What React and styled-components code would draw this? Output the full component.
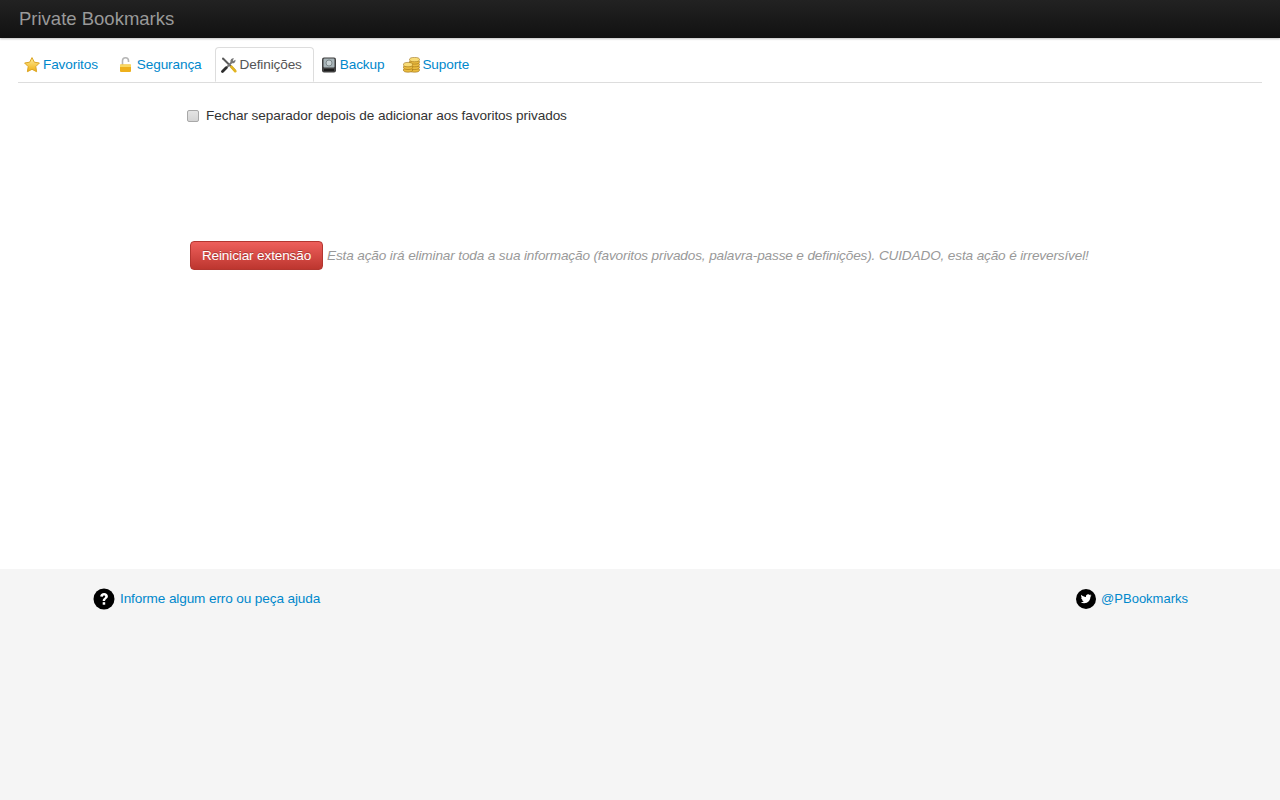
import styled, { createGlobalStyle } from 'styled-components';

const Global = createGlobalStyle`
  html, body { margin: 0; padding: 0; }
  body {
    font-family: "Liberation Sans", Arial, sans-serif;
    font-size: 13.6px;
    letter-spacing: -0.12px;
    line-height: 20px;
    color: #333;
    background: #fff;
  }
`;

const StarIcon = () => (
  <svg width="16" height="16" viewBox="0 0 16 16">
    <defs>
      <linearGradient id="star" x1="0" y1="0" x2="0" y2="1">
        <stop offset="0" stopColor="#ffee9a" />
        <stop offset="1" stopColor="#efae10" />
      </linearGradient>
    </defs>
    <path d="M8 .6l2.3 4.6 5.1.8-3.6 3.600.8 5.100L8 12.300 3.400 14.700l.8-5.100L.6 6l5.100-.8z" fill="url(#star)" stroke="#dca524" strokeWidth="1" strokeLinejoin="round" />
  </svg>
);

const LockIcon = () => (
  <svg width="16" height="16" viewBox="0 0 16 16">
    <path d="M4.500 8V3.800a3 3 0 0 1 6 0V5" fill="none" stroke="#b5b5b5" strokeWidth="1.600" />
    <rect x="2" y="7.500" width="11" height="7.500" rx="1" fill="#eeb01c" />
    <rect x="2" y="7.500" width="11" height="2.500" fill="#f9d864" />
  </svg>
);

const ToolsIcon = () => (
  <svg width="16" height="16" viewBox="0 0 16 16">
    <path d="M2 1.500L13.500 13" stroke="#5a5a5a" strokeWidth="2" strokeLinecap="round" />
    <path d="M14.500 2.800l-2.200 1.100-.5-.5 1.100-2.200a3 3 0 0 0-3.400 3.900L4.500 10.500l1.200 1.200 5.400-5.400a3 3 0 0 0 3.400-3.500z" fill="#777" />
    <path d="M5.200 10.800l-3.700 3.700" stroke="#2c2c2c" strokeWidth="2.800" strokeLinecap="round" />
    <path d="M10.500 9.800l3.700 4.300" stroke="#e2b420" strokeWidth="2.800" strokeLinecap="round" />
  </svg>
);

const DriveIcon = () => (
  <svg width="16" height="16" viewBox="0 0 16 16">
    <rect x="1" y="0.500" width="14" height="15" rx="2" fill="#3f3f3f" />
    <rect x="2.500" y="1.500" width="11" height="9" rx="1" fill="#a8b4b8" />
    <circle cx="8" cy="6" r="3" fill="#c8d2d4" stroke="#6c777a" strokeWidth=".8" />
    <rect x="3" y="12" width="10" height="2" fill="#1c1c1c" />
  </svg>
);

const CoinsIcon = () => (
  <svg width="17" height="16" viewBox="0 0 17 16">
    <g fill="#eabc40" stroke="#9c6e14" strokeWidth=".6">
      <ellipse cx="11.500" cy="13" rx="5" ry="2.200" />
      <ellipse cx="11.500" cy="10.300" rx="5" ry="2.200" />
      <ellipse cx="11.500" cy="7.600" rx="5" ry="2.200" />
      <ellipse cx="11.500" cy="4.900" rx="5" ry="2.200" />
      <ellipse cx="11.500" cy="2.600" rx="5" ry="2.200" fill="#f8dc78" />
      <ellipse cx="5" cy="13" rx="4.600" ry="2.200" />
      <ellipse cx="5" cy="10.300" rx="4.600" ry="2.200" />
      <ellipse cx="5" cy="7.600" rx="4.600" ry="2.200" fill="#f8dc78" />
    </g>
  </svg>
);

const Page = styled.div`
  display: flex;
  flex-direction: column;
  min-height: 100vh;
`;

const TopBar = styled.header`
  height: 38px;
  padding-left: 19px;
  display: flex;
  align-items: center;
  background: linear-gradient(to bottom, #222, #111);
  box-shadow: 0 1px 2px rgba(0, 0, 0, 0.25);
`;

const Brand = styled.div`
  font-size: 18.500px;
  letter-spacing: 0;
  color: #999;
`;

const Main = styled.main`
  flex: 1;
  padding: 9px 18px 0;
`;

const Tabs = styled.ul`
  display: flex;
  height: 35px;
  margin: 0;
  padding: 0;
  list-style: none;
  border-bottom: 1px solid #ddd;
`;

const Tab = styled.li`
  display: flex;
  align-items: center;
  gap: ${p => p.$iconGap || 3}px;
  height: 35px;
  margin-right: ${p => p.$gap || 0}px;
  padding: 0 ${p => (p.$active ? 11 : 5)}px 0 5px;
  box-sizing: border-box;
  color: ${p => (p.$active ? '#555' : '#0088cc')};
  background: #fff;
  border: 1px solid ${p => (p.$active ? '#ddd' : 'transparent')};
  border-bottom-color: ${p => (p.$active ? '#fff' : 'transparent')};
  border-radius: 4px 4px 0 0;
`;

const Settings = styled.section`
  padding-left: 169px;
`;

const CheckRow = styled.label`
  display: flex;
  align-items: center;
  gap: 7px;
  margin-top: 23px;
  letter-spacing: -0.07px;
`;

const Check = styled.input`
  appearance: none;
  width: 12px;
  height: 12px;
  margin: 0;
  background: linear-gradient(to bottom, #e4e4e4, #d4d4d4);
  border: 1px solid #a8a8a8;
  border-radius: 2px;
`;

const ResetRow = styled.div`
  display: flex;
  align-items: center;
  gap: 4px;
  margin: 115px 0 0 3px;
`;

const DangerButton = styled.button`
  width: 133px;
  height: 29px;
  padding: 0;
  font: inherit;
  letter-spacing: -0.15px;
  color: #fff;
  text-shadow: 0 -1px 0 rgba(0, 0, 0, 0.25);
  background: linear-gradient(to bottom, #ee5f5b, #bd362f);
  border: 1px solid #b33630;
  border-radius: 4px;
`;

const Hint = styled.em`
  color: #999;
  letter-spacing: -0.14px;
`;

const Footer = styled.footer`
  height: 231px;
  box-sizing: border-box;
  padding: 19px 92px 0 93px;
  display: flex;
  justify-content: space-between;
  align-items: flex-start;
  background: #f5f5f5;
`;

const FooterLink = styled.a`
  display: flex;
  align-items: center;
  gap: 5px;
  font-size: ${p => p.$size || 13.6}px;
  line-height: 22px;
  letter-spacing: ${p => (p.$size ? 0 : -0.12)}px;
  color: #0088cc;
  text-decoration: none;
`;

const App = () => {
  return (
    <Page>
      <Global />
      <TopBar>
        <Brand>Private Bookmarks</Brand>
      </TopBar>
      <Main>
        <Tabs>
          <Tab $gap={8}><StarIcon />Favoritos</Tab>
          <Tab $gap={7}><LockIcon />Segurança</Tab>
          <Tab $active $gap={1}><ToolsIcon />Definições</Tab>
          <Tab $gap={7}><DriveIcon />Backup</Tab>
          <Tab $iconGap={2}><CoinsIcon />Suporte</Tab>
        </Tabs>
        <Settings>
          <CheckRow>
            <Check type="checkbox" />
            Fechar separador depois de adicionar aos favoritos privados
          </CheckRow>
          <ResetRow>
            <DangerButton>Reiniciar extensão</DangerButton>
            <Hint>Esta ação irá eliminar toda a sua informação (favoritos privados, palavra-passe e definições). CUIDADO, esta ação é irreversível!</Hint>
          </ResetRow>
        </Settings>
      </Main>
      <Footer>
        <FooterLink>
          <svg width="22" height="22" viewBox="0 0 22 22">
            <circle cx="11" cy="11" r="10.500" fill="#000" />
            <path d="M7.200 8.600c0-2.200 1.700-3.600 3.900-3.600s3.800 1.300 3.800 3.300c0 2.700-2.800 2.600-2.800 4.700H9.700c0-3 2.500-3 2.500-4.500 0-.6-.4-1-1.100-1s-1.100.5-1.200 1.300z" fill="#fff" />
            <rect x="9.700" y="14.200" width="2.500" height="2.500" fill="#fff" />
          </svg>
          Informe algum erro ou peça ajuda
        </FooterLink>
        <FooterLink $size={13}>
          <svg width="20" height="20" viewBox="0 0 20 20">
            <circle cx="10" cy="10" r="10" fill="#000" />
            <path d="M15.500 6.400c-.4.2-.8.3-1.300.4.500-.3.800-.7 1-1.200-.4.300-.9.400-1.400.5a2.200 2.200 0 0 0-3.800 2c-1.900-.1-3.500-1-4.600-2.300-.6 1-.3 2.300.7 3-.4 0-.7-.1-1-.3 0 1.100.8 2 1.800 2.200-.3.100-.7.100-1 0 .3.900 1.100 1.500 2.100 1.500-1 .8-2.200 1.100-3.300 1 1 .6 2.200 1 3.400 1 4.100 0 6.400-3.400 6.300-6.500.4-.3.8-.7 1.100-1.300z" fill="#fff" />
          </svg>
          @PBookmarks
        </FooterLink>
      </Footer>
    </Page>
  );
};

export default App;
